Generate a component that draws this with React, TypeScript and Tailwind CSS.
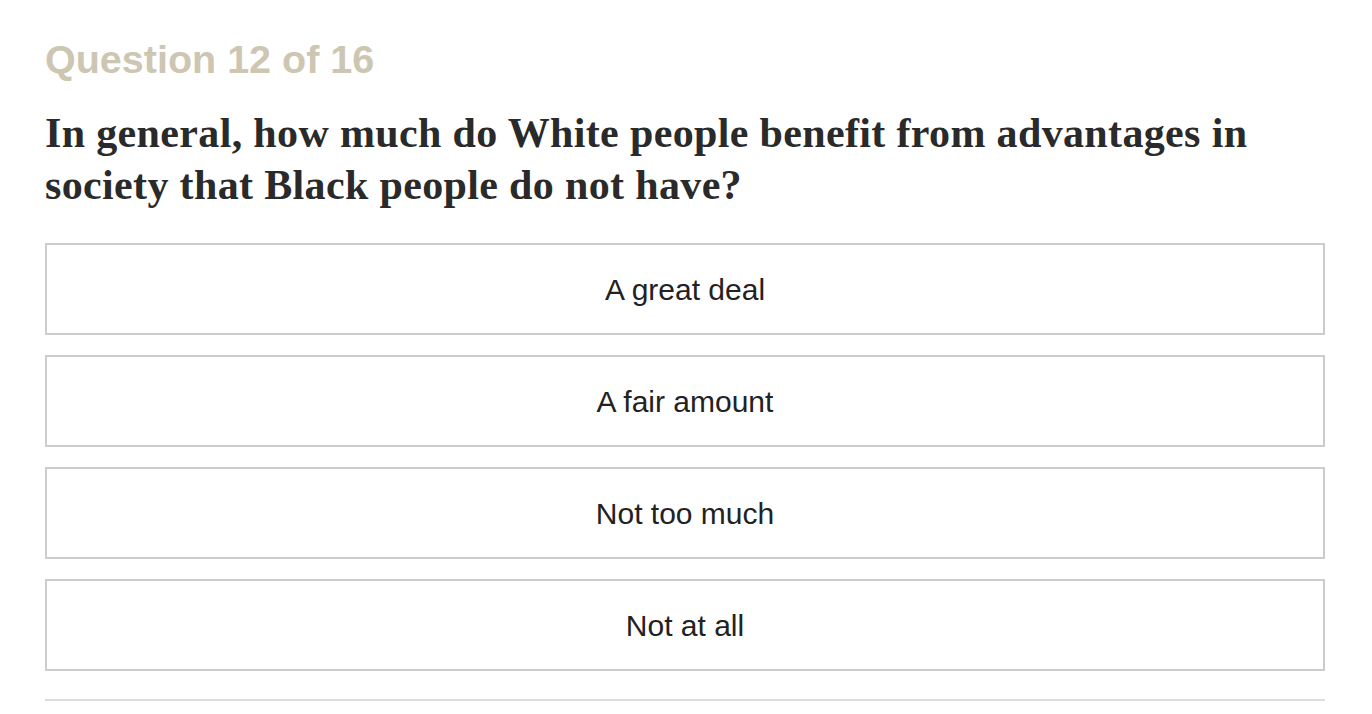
export default function App() {
  const options = ["A great deal", "A fair amount", "Not too much", "Not at all"];
  return (
    <div className="w-[1372px] h-[714px] overflow-hidden bg-white pl-[45px] pt-[36px]">
      <div className="w-[1280px]">
        <div
          className="text-[39.5px] leading-[46px] font-bold text-[#cdc6b3]"
          style={{ fontFamily: '"Liberation Sans", Arial, sans-serif' }}
        >
          Question 12 of 16
        </div>
        <h1
          className="mt-[25px] text-[42px] leading-[52px] font-bold tracking-[0.35px] text-[#2a2a2a]"
          style={{ fontFamily: '"Liberation Serif", "Times New Roman", serif' }}
        >
          In general, how much do White people benefit from advantages in
          <br />
          society that Black people do not have?
        </h1>
        <div className="mt-[32px] flex flex-col gap-[20px]">
          {options.map((o) => (
            <div
              key={o}
              className="h-[92px] border-2 border-[#cccccc] flex items-center justify-center text-[30px] text-[#222222]"
              style={{ fontFamily: '"Liberation Sans", Arial, sans-serif' }}
            >
              {o}
            </div>
          ))}
        </div>
        <div className="mt-[28px] h-[2px] bg-[#dddddd]" />
      </div>
    </div>
  );
}
